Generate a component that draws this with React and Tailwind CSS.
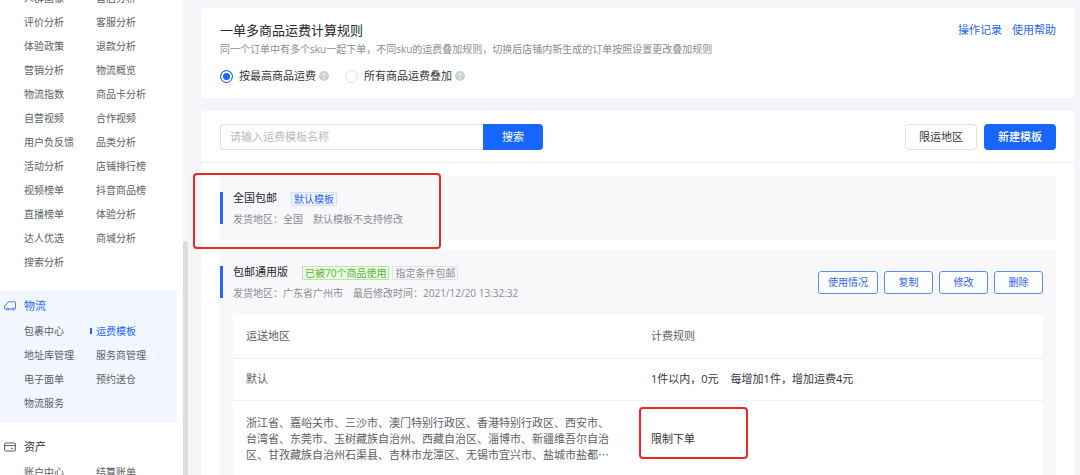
import React, { useState } from 'react';

const analysisLinks = [
  '人群画像', '售后分析',
  '评价分析', '客服分析',
  '体验政策', '退款分析',
  '营销分析', '物流概览',
  '物流指数', '商品卡分析',
  '自营视频', '合作视频',
  '用户负反馈', '品类分析',
  '活动分析', '店铺排行榜',
  '视频榜单', '抖音商品榜',
  '直播榜单', '体验分析',
  '达人优选', '商城分析',
  '搜索分析',
];

const logisticsLinks = [
  '包裹中心', '运费模板',
  '地址库管理', '服务商管理',
  '电子面单', '预约送仓',
  '物流服务',
];

const assetLinks = ['账户中心', '结算账单'];

const regions =
  '浙江省、嘉峪关市、三沙市、澳门特别行政区、香港特别行政区、西安市、台湾省、东莞市、玉树藏族自治州、西藏自治区、淄博市、新疆维吾尔自治区、甘孜藏族自治州石渠县、吉林市龙潭区、无锡市宜兴市、盐城市盐都⋯';

const TruckIcon = () => (
  <svg viewBox="0 0 12 10" className="h-[10px] w-3" fill="none" stroke="currentColor" strokeWidth="0.8" strokeLinejoin="round">
    <path d="M2.6 8H1.3a.8.8 0 0 1-.8-.8V4.8l2-1.3L3.8 1.3A1 1 0 0 1 4.6.8h5.9a1 1 0 0 1 1 1v5.4a.8.8 0 0 1-.8.8h-.5M4.8 8h3.2" />
    <circle cx="3.7" cy="8.1" r="1.1" />
    <circle cx="9.1" cy="8.1" r="1.1" />
  </svg>
);

const WalletIcon = () => (
  <svg viewBox="0 0 12 10" className="h-[10px] w-3" fill="none" stroke="currentColor" strokeWidth="0.8">
    <rect x="0.6" y="1" width="10.8" height="8" rx="1" />
    <path d="M.6 3.6h10.8M7 6.3h2.4" />
  </svg>
);

const HelpIcon = () => (
  <svg viewBox="0 0 10 10" className="ml-[3px] size-[10px]">
    <circle cx="5" cy="5" r="5" fill="#cfd0d3" />
    <path d="M3.6 4.1a1.4 1.4 0 1 1 2.1 1.2c-.5.3-.7.5-.7.9" fill="none" stroke="#fff" strokeWidth="0.9" />
    <circle cx="5" cy="7.5" r="0.55" fill="#fff" />
  </svg>
);

const NavSection = ({ icon, title, links, active }) => (
  <section className={`mt-2 pt-1 pb-2 ${active ? 'bg-[#f1f6ff]' : ''}`}>
    <h2
      className={`mb-px flex h-6 items-center gap-2 pl-1 text-[11px] ${
        active ? 'text-[#2a66f5]' : 'text-[#33353c]'
      }`}
    >
      {icon}
      {title}
    </h2>
    <NavLinks links={links} active={active} />
  </section>
);

const NavLinks = ({ links, active }) => (
  <ul className="grid grid-cols-[72px_1fr] pl-6 text-[10px] leading-6">
    {links.map((link) => (
      <li key={link} className="relative h-6 whitespace-nowrap">
        {link === active && <span className="absolute top-[9px] -left-[6px] h-[6px] w-[2px] bg-[#1966ff]" />}
        <a href="#" className={link === active ? 'text-[#1966ff]' : 'text-[#5c5e66]'}>
          {link}
        </a>
      </li>
    ))}
  </ul>
);

const Sidebar = () => (
  <aside className="flex w-[188px] shrink-0 overflow-hidden bg-white">
    <nav className="w-[177px]">
      <div className="-mt-3.5 pb-2">
        <NavLinks links={analysisLinks} />
      </div>
      <NavSection icon={<TruckIcon />} title="物流" links={logisticsLinks} active="运费模板" />
      <NavSection icon={<WalletIcon />} title="资产" links={assetLinks} />
    </nav>
    {/* scroll track */}
    <div className="ml-auto flex w-[5px] flex-col bg-[#f7f7fa]">
      <div className="mt-[241px] flex-1 rounded-t-sm bg-[#dcdcdf]" />
    </div>
  </aside>
);

const RadioOption = ({ label, checked, onChange }) => (
  <div className="flex items-center">
    <label className="flex items-center gap-[6px] text-[11px] text-[#33353c]">
      <input
        type="radio"
        name="freight-rule"
        checked={checked}
        onChange={onChange}
        className="size-[13px] appearance-none rounded-full border border-[#dcdee3] bg-white checked:border-[#1966ff] checked:bg-[#1966ff] checked:shadow-[inset_0_0_0_2px_#fff]"
      />
      {label}
    </label>
    <HelpIcon />
  </div>
);

const RuleCard = () => {
  const [rule, setRule] = useState('max');

  return (
    <section className="rounded-sm bg-white px-[19px] py-3">
      <div className="flex items-start justify-between">
        <h1 className="text-[13px] leading-5 text-[#25272e]">一单多商品运费计算规则</h1>
        <div className="flex gap-[10px] text-[11px] leading-5 text-[#2a66f5]">
          <a href="#">操作记录</a>
          <a href="#">使用帮助</a>
        </div>
      </div>
      <p className="text-[10px] leading-[18px] text-[#898b92]">
        同一个订单中有多个sku一起下单，不同sku的运费叠加规则，切换后店铺内新生成的订单按照设置更改叠加规则
      </p>
      <div className="mt-2 flex h-5 items-center gap-4">
        <RadioOption label="按最高商品运费" checked={rule === 'max'} onChange={() => setRule('max')} />
        <RadioOption label="所有商品运费叠加" checked={rule === 'sum'} onChange={() => setRule('sum')} />
      </div>
    </section>
  );
};

const Toolbar = () => (
  <div className="flex justify-between border-b border-[#eeeff2] px-[19px] pt-[13px] pb-3 text-[11px]">
    <form className="flex h-[26px]" onSubmit={(e) => e.preventDefault()}>
      <input
        type="text"
        aria-label="运费模板名称"
        placeholder="请输入运费模板名称"
        className="w-[263px] rounded-l-sm border border-r-0 border-[#dfe0e4] bg-white px-[9px] text-[#33353c] outline-none placeholder:text-[#b9bbc1]"
      />
      <button type="submit" className="w-[60px] rounded-r-sm bg-[#1966ff] text-white">
        搜索
      </button>
    </form>
    <div className="flex gap-[7px]">
      <button className="h-[26px] w-[72px] rounded-sm border border-[#dfe0e4] bg-white text-[#33353c]">限运地区</button>
      <button className="h-[26px] w-[72px] rounded-sm bg-[#1966ff] font-medium text-white">新建模板</button>
    </div>
  </div>
);

const TemplateHeader = ({ title, tags, info, children }) => (
  <div className="flex h-16 items-center justify-between pr-[13px]">
    <div className="flex items-center gap-[10px]">
      <span className="h-8 w-[3px] bg-[#2a66f5]" />
      <div className="pt-[2px]">
        <div className="flex h-[21px] items-center gap-[14px]">
          <h3 className="text-[11px] text-[#25272e]">{title}</h3>
          <div className="flex gap-[3px] text-[10px] leading-3">{tags}</div>
        </div>
        <div className="flex h-[21px] items-center gap-[10px] text-[10px] text-[#898b92]">
          {info.map((text) => (
            <span key={text}>{text}</span>
          ))}
        </div>
      </div>
    </div>
    {children}
  </div>
);

const ActionButton = ({ children }) => (
  <button className="h-[23px] min-w-[49px] rounded-[3px] border border-[#5b8cfa] bg-white px-[9px] text-[10px] text-[#2a66f5]">
    {children}
  </button>
);

const RuleTable = () => (
  <div className="px-[13px] pt-px pb-4">
    <table className="w-full table-fixed bg-white text-left text-[11px] leading-4 text-[#5c5e66]">
      <thead>
        <tr className="h-[43px] border-b border-[#eeeff2]">
          <th className="px-[13px] font-normal">运送地区</th>
          <th className="px-[13px] font-normal">计费规则</th>
        </tr>
      </thead>
      <tbody>
        <tr className="h-[42px] border-b border-[#eeeff2]">
          <td className="px-[13px]">默认</td>
          <td className="px-[13px] text-[#33353c]">
            <span className="mr-3">1件以内，0元</span>
            <span>每增加1件，增加运费4元</span>
          </td>
        </tr>
        <tr className="border-b border-[#eeeff2]">
          <td className="py-[14px] pr-7 pl-[13px]">{regions}</td>
          <td className="px-[13px] text-[#33353c]">
            <span className="relative">
              限制下单
              <span className="absolute -top-6 -left-3 h-[52px] w-[109px] rounded-sm border-2 border-[#e92a24]" />
            </span>
          </td>
        </tr>
      </tbody>
    </table>
  </div>
);

export default function App() {
  return (
    <div className="flex h-screen overflow-hidden bg-[#f4f4f9] font-['Open_Sans','Noto_Sans_CJK_SC',sans-serif]">
      <Sidebar />
      <main className="flex min-w-0 flex-1 flex-col gap-[13px] overflow-hidden pt-2 pr-[5px] pl-[13px]">
        <RuleCard />
        <section className="rounded-sm bg-white">
          <Toolbar />
          <div className="flex flex-col gap-[10px] px-[19px] py-[13px]">
            <article className="relative bg-[#f8f8fb]">
              <TemplateHeader
                title="全国包邮"
                tags={<span className="border border-[#d3e1ff] bg-[#eff4ff] px-[2px] text-[#2a66f5]">默认模板</span>}
                info={['发货地区：全国', '默认模板不支持修改']}
              />
              <div className="absolute -top-[3px] -left-[27px] h-[76px] w-[248px] rounded-sm border-2 border-[#e92a24]" />
            </article>
            <article className="bg-[#f8f8fb]">
              <TemplateHeader
                title="包邮通用版"
                tags={
                  <>
                    <span className="border border-[#b9e8a4] bg-[#effbe9] px-[2px] text-[#4fb82c]">已被70个商品使用</span>
                    <span className="border border-[#dfe0e4] px-[2px] text-[#898b92]">指定条件包邮</span>
                  </>
                }
                info={['发货地区：广东省广州市', '最后修改时间：2021/12/20 13:32:32']}
              >
                <div className="flex gap-[6px]">
                  <ActionButton>使用情况</ActionButton>
                  <ActionButton>复制</ActionButton>
                  <ActionButton>修改</ActionButton>
                  <ActionButton>删除</ActionButton>
                </div>
              </TemplateHeader>
              <RuleTable />
            </article>
          </div>
        </section>
      </main>
    </div>
  );
}
